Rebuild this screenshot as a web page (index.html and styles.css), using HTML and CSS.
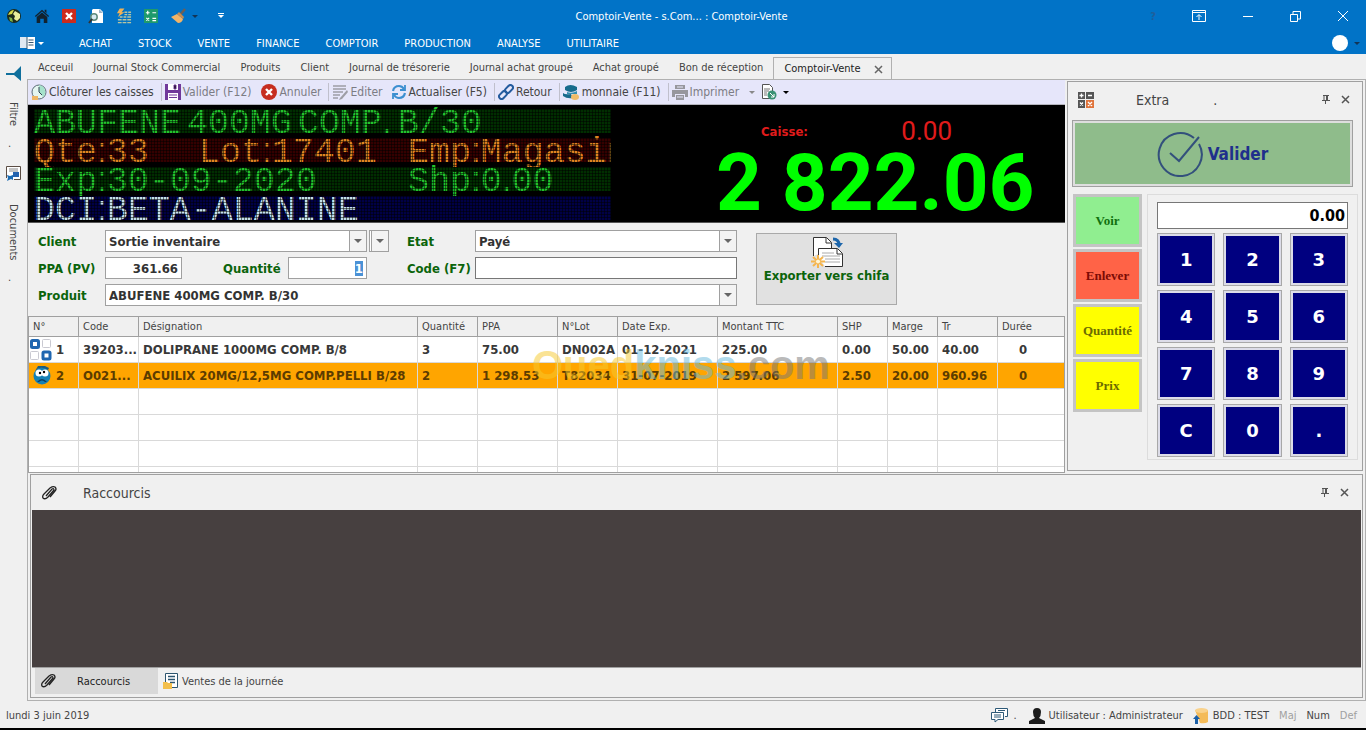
FILE: index.html
```html
<!DOCTYPE html>
<html lang="fr">
<head>
    <meta charset="UTF-8">
    <meta name="viewport" content="width=device-width, initial-scale=1.0">
    <title>Comptoir-Vente</title>
    <link rel="stylesheet" href="styles.css">
</head>
<body>
    <!-- Barre de titre et menu -->
    <header class="top">
        <div class="title-bar">
            <div class="quick">
                <button aria-label="Application"><svg width="16" height="16" viewBox="0 0 16 16"><circle cx="8" cy="8" r="7" fill="#1c2b1c"/><path d="M2 7q2-5 6-5l-2 4z" fill="#d8dc4a"/><path d="M9 3l5 3v4l-3 3-3-2 1-3-2-2z" fill="#e9ef9d"/><path d="M3 9l3 1 1 4-3-1z" fill="#7fb548"/></svg></button>
                <button aria-label="Accueil"><svg width="16" height="16" viewBox="0 0 18 16"><path d="M1 8L9 1l8 7-1 1-7-6-7 6z" fill="#12222e"/><path d="M3 9l6-5 6 5v7h-4v-5H7v5H3zM12 1h2v4l-2-2z" fill="#12222e"/></svg></button>
                <button aria-label="Fermer"><svg width="14" height="14" viewBox="0 0 14 14"><rect width="14" height="14" fill="#cc2b1d"/><path d="M4 4l6 6M10 4l-6 6" stroke="#fff" stroke-width="2.4"/></svg></button>
                <button aria-label="Aperçu"><svg width="16" height="16" viewBox="0 0 16 16"><path d="M5 1h7l3 3v11H4V2z" fill="#fff"/><path d="M11 1v4h4" fill="#9bb4c8"/><circle cx="6" cy="9" r="3.2" fill="#d7eaf2" stroke="#5d8a7b" stroke-width="1.5"/><path d="M4 11l-3 4" stroke="#333" stroke-width="2"/></svg></button>
                <button aria-label="Calcul rapide"><svg width="16" height="16" viewBox="0 0 17 16"><path d="M4 0h5L6 4h3L2 9l2-4H1z" fill="#f2b255"/><path d="M9 4h3M13 4h3M4 9h3M8 9h3M12 9h4M9 6.5h3M13 6.5h3M2 12h4M7 12h4M12 12h4M2 15h4M7 15h4M12 15h4" stroke="#b9c5a0" stroke-width="1.5"/></svg></button>
                <button aria-label="Calculatrice"><svg width="14" height="14" viewBox="0 0 15 15"><rect width="15" height="15" fill="#1f9a6b"/><path d="M2 4h4M4 2v4M9 4h4M2.500 9.500l3 3M5.500 9.500l-3 3M9 10h4M9 12.500h4" stroke="#fff" stroke-width="1.3"/></svg></button>
                <button aria-label="Nettoyer"><svg width="16" height="16" viewBox="0 0 16 16"><path d="M15 1l-5 6" stroke="#6a5f59" stroke-width="2.5"/><path d="M1 9l6-3 6 5q-1 4-5 4z" fill="#f2b467"/><path d="M7 6l2-2 5 5-1 2z" fill="#c98d52"/></svg></button>
                <span class="caret dark"></span>
                <span class="caret lined"></span>
            </div>
            <div class="title">Comptoir-Vente - s.Com... : Comptoir-Vente</div>
            <div class="window-buttons">
                <button class="help" aria-label="Aide">?</button>
                <button aria-label="Ruban"><svg width="14" height="12" viewBox="0 0 14 12" fill="none" stroke="#fff"><path d="M.5.5h13v11H.5zM.5 2.500h13M7 10V5M4.500 7L7 4.500 9.500 7"/></svg></button>
                <button aria-label="Réduire"><svg width="12" height="12" viewBox="0 0 12 12"><path d="M1 6.500h10" stroke="#fff"/></svg></button>
                <button aria-label="Restaurer"><svg width="11" height="11" viewBox="0 0 11 11" fill="none" stroke="#fff"><path d="M.5 3.500h7v7h-7zM3 3V.5h7.500V8H8"/></svg></button>
                <button aria-label="Quitter"><svg width="12" height="12" viewBox="0 0 12 12"><path d="M1 1l10 10M11 1L1 11" stroke="#fff"/></svg></button>
            </div>
        </div>
        <nav class="menu">
            <button class="book" aria-label="Fichier"><svg width="15" height="12" viewBox="0 0 15 12"><rect width="7" height="11" fill="#dfe9f2"/><rect x="7" width="8" height="12" fill="#fff"/><path d="M8.500 3h5M8.500 5.500h5M8.500 8h5M7 0v12" stroke="#36566f"/></svg><span class="caret"></span></button>
            <a href="#">ACHAT</a>
            <a href="#">STOCK</a>
            <a href="#">VENTE</a>
            <a href="#">FINANCE</a>
            <a href="#">COMPTOIR</a>
            <a href="#">PRODUCTION</a>
            <a href="#">ANALYSE</a>
            <a href="#">UTILITAIRE</a>
            <button class="user" aria-label="Compte"><span class="avatar"></span><span class="caret dark"></span></button>
        </nav>
    </header>

    <div class="workspace">
        <!-- Panneaux repliés à gauche -->
        <aside class="rail">
            <svg width="16" height="15" viewBox="0 0 16 15"><path d="M15 0v15L8 9H0V7h8z" fill="#0f6f9c"/></svg>
            <button class="rail-filter">Filtre</button>
            <span class="rail-dot">.</span>
            <svg class="rail-doc" width="15" height="15" viewBox="0 0 15 15"><path d="M.5 12V.5h14v13H8" fill="#fff" stroke="#5b4d44"/><path d="M3 3h9M3 5h9" stroke="#888"/><path d="M7 6h6v5H7z" fill="#2563ae"/><path d="M1 9l3 1 3-1v5l-2-1-4 2 1-3z" fill="#1a6ab2"/></svg>
            <button class="rail-documents">Documents</button>
            <span class="rail-dot">.</span>
        </aside>

        <div class="content">
            <nav class="tabs">
                <a href="#">Acceuil</a>
                <a href="#">Journal Stock Commercial</a>
                <a href="#">Produits</a>
                <a href="#">Client</a>
                <a href="#">Journal de trésorerie</a>
                <a href="#">Journal achat groupé</a>
                <a href="#">Achat groupé</a>
                <a href="#">Bon de réception</a>
                <a href="#" class="active">Comptoir-Vente <svg width="9" height="9" viewBox="0 0 9 9"><path d="M1 1l7 7M8 1L1 8" stroke="#666" stroke-width="1.500"/></svg></a>
            </nav>

            <main class="page">
                <div class="upper">
                    <section class="sale">
                        <div class="toolbar">
                            <button><svg width="16" height="16" viewBox="0 0 16 16"><circle cx="8" cy="8" r="7" fill="#e4f6f0" stroke="#5b6b77"/><path d="M8 1a7 7 0 0 1 4 12L8 8z" fill="#a5e2cb"/><path d="M8 3v5l3 3" fill="none" stroke="#345"/><path d="M1 12h6v4H1z" fill="#efb765"/></svg>Clôturer les caisses</button>
                            <button class="off sep valid"><svg width="16" height="16" viewBox="0 0 16 16"><path d="M0 0h16v16H0z" fill="#70389a"/><path d="M3 0h10v6H3zM3 9h10v7H3z" fill="#fff"/><path d="M9 1h2v4H9zM4 11h8M4 13.500h8" stroke="#70389a"/></svg>Valider (F12)</button>
                            <button class="off cancel"><svg width="16" height="16" viewBox="0 0 16 16"><circle cx="8" cy="8" r="8" fill="#c62d20"/><path d="M5 5l6 6M11 5l-6 6" stroke="#fff" stroke-width="2.400"/></svg>Annuler</button>
                            <button class="off sep edit"><svg width="16" height="16" viewBox="0 0 16 16"><path d="M1 2h13M1 5h13M1 8h10M1 11h7M1 14h5" stroke="#9d9da5" stroke-width="1.500"/><path d="M15 6l-7 8-1 2 3-1 6-7z" fill="#9d9da5"/></svg>Editer</button>
                            <button class="refresh"><svg width="14" height="16" viewBox="0 0 14 16" fill="none" stroke="#3c8fd0" stroke-width="2.200"><path d="M1 7q1-5 6-5 3 0 5 3M13 9q-1 5-6 5-3 0-5-3"/><path d="M13 1v5H8M1 15v-5h5" stroke-width="1.800"/></svg>Actualiser (F5)</button>
                            <button class="sep link"><svg width="16" height="16" viewBox="0 0 16 16" fill="none" stroke="#245b9e" stroke-width="2"><rect x="6.500" y="2.500" width="9" height="5" rx="2.500" transform="rotate(-45 11 5)"/><rect x=".5" y="8.500" width="9" height="5" rx="2.500" transform="rotate(-45 5 11)"/></svg>Retour</button>
                            <button class="sep money"><svg width="17" height="16" viewBox="0 0 17 16"><path d="M2 3q5-4 12 0v3q-6 4-12 0zM0 9q2 2 8 1l2 4q-6 1-10-2z" fill="#176b8c"/><path d="M4 8q5 2 10-1v3H4z" fill="#3390b0"/><ellipse cx="12" cy="13" rx="4" ry="3" fill="#f0bd69"/></svg>monnaie (F11)</button>
                            <button class="off sep print"><svg width="16" height="15" viewBox="0 0 16 15"><path d="M3 0h10v4H3zM0 5h16v7h-3V9H3v3H0zM4 10h8v5H4z" fill="#97979d"/><path d="M5 2h6M5 12h6" stroke="#e6e6fa"/></svg>Imprimer<span class="caret grey"></span></button>
                            <button class="export" aria-label="Exporter"><svg width="16" height="16" viewBox="0 0 16 16"><path d="M1.500.5h7l3 3v11h-10z" fill="#fff" stroke="#555"/><path d="M3 5h6M3 7h5M3 9h3M3 11h3" stroke="#777"/><circle cx="11" cy="11" r="4.500" fill="#3a9175"/><path d="M9 9l4 4v-3M13 13h-3" stroke="#fff" fill="none"/></svg><span class="caret black"></span></button>
                        </div>

                        <!-- Afficheur -->
                        <div class="display">
                            <div class="led">
                                <div class="led-row green"><span>ABUFENE</span><span>400MG</span><span>COMP<i>.</i></span><span>B/30</span></div>
                                <div class="led-row amber"><span class="c1">Qte<i>:</i>33</span><span class="c2">Lot<i>:</i>17401</span><span>Emp<i>:</i>Magasin</span></div>
                                <div class="led-row green"><span class="c12">Exp<i>:</i>30-09-2020</span><span>Shp<i>:</i>0<i>.</i>00</span></div>
                                <div class="led-row blue"><span>DCI<i>:</i>BETA-ALANINE</span></div>
                            </div>
                            <div class="amount">
                                <div class="caisse"><span>Caisse:</span><output>0.00</output></div>
                                <output class="total">2 822.06</output>
                            </div>
                        </div>

                        <form class="entry">
                            <div class="fields">
                                <div class="line">
                                    <label for="client">Client</label>
                                    <div class="combo w-client"><select id="client"><option>Sortie inventaire</option></select></div>
                                    <div class="combo w-mini"><select aria-label="Options client"><option></option></select></div>
                                    <label for="etat" class="mid">Etat</label>
                                    <div class="combo w-etat"><select id="etat"><option>Payé</option></select></div>
                                </div>
                                <div class="line">
                                    <label for="ppa">PPA (PV)</label>
                                    <input id="ppa" class="w-ppa" value="361.66">
                                    <label for="qte" class="qte">Quantité</label>
                                    <input id="qte" class="w-qte" value="1">
                                    <label for="code" class="mid code">Code (F7)</label>
                                    <input id="code" class="w-etat dark-border">
                                </div>
                                <div class="line">
                                    <label for="produit">Produit</label>
                                    <div class="combo grow"><select id="produit"><option>ABUFENE 400MG COMP. B/30</option></select></div>
                                </div>
                            </div>
                            <button type="button" class="chifa"><svg width="32" height="32" viewBox="0 0 32 32" fill="none"><path d="M2.500 20V1.500h13l5 5V12" fill="#fff" stroke="#333"/><path d="M15 2v5h5" stroke="#333"/><path d="M7.500 20v-7.500h19l5 5v13H14" fill="#fff" stroke="#333"/><path d="M26 13v5h5" stroke="#333"/><path d="M11 17h12M11 20h18M14 23h15M14 26h15" stroke="#aaa"/><path d="M22 3q6 0 6 6" stroke="#1d66ab" stroke-width="3"/><path d="M23 7h9l-4 5z" fill="#1d66ab"/><path d="M7 19v13M0 25.500h14M2 21l10 9M12 21L2 30" stroke="#f5b54d" stroke-width="2"/><circle cx="7" cy="25.500" r="2.500" fill="#fff4d5" stroke="#f5b54d"/></svg>Exporter vers chifa</button>
                        </form>

                        <div class="grid">
                            <table>
                                <colgroup><col class="w50"><col class="w60"><col><col class="w60"><col class="w80"><col class="w60"><col class="w100"><col class="w120"><col class="w50"><col class="w50"><col class="w60"><col class="w66"></colgroup>
                                <thead>
                                    <tr><th>N°</th><th>Code</th><th>Désignation</th><th>Quantité</th><th>PPA</th><th>N°Lot</th><th>Date Exp.</th><th>Montant TTC</th><th>SHP</th><th>Marge</th><th>Tr</th><th>Durée</th></tr>
                                </thead>
                                <tbody>
                                    <tr><td class="num"><svg width="22" height="22" viewBox="0 0 22 22" fill="#fff"><rect x="1.500" y="1.500" width="7" height="7" rx="1" stroke="#1f66b0" stroke-width="3"/><rect x="12.500" y=".5" width="8" height="8" rx="1" stroke="#c9c9d1"/><rect x=".5" y="12.500" width="8" height="8" rx="1" stroke="#c9c9d1"/><rect x="13" y="13" width="7" height="7" rx="1" stroke="#1f66b0" stroke-width="3"/></svg>1</td><td>39203...</td><td>DOLIPRANE 1000MG COMP. B/8</td><td>3</td><td>75.00</td><td>DN002A</td><td>01-12-2021</td><td>225.00</td><td>0.00</td><td>50.00</td><td>40.00</td><td class="center">0</td></tr>
                                    <tr class="selected"><td class="num"><svg width="22" height="22" viewBox="0 0 22 22"><circle cx="12" cy="11" r="8.500" fill="#1681b5"/><path d="M5 6q5-6 13-1l1-2-4-2-7 0z" fill="#1c5c80"/><circle cx="9" cy="8" r="3.500" fill="#fff"/><circle cx="15" cy="8" r="3.500" fill="#fff"/><circle cx="10" cy="8" r="1.200"/><circle cx="14" cy="7" r="1.200"/><path d="M7 17q5-6 10 0l-2 0q-3-3-6 0z" fill="#0d3f63"/></svg>2</td><td>O021...</td><td>ACUILIX 20MG/12,5MG COMP.PELLI B/28</td><td>2</td><td>1 298.53</td><td>T82034</td><td>31-07-2019</td><td>2 597.06</td><td>2.50</td><td>20.00</td><td>960.96</td><td class="center">0</td></tr>
                                    <tr><td></td><td></td><td></td><td></td><td></td><td></td><td></td><td></td><td></td><td></td><td></td><td></td></tr>
                                    <tr><td></td><td></td><td></td><td></td><td></td><td></td><td></td><td></td><td></td><td></td><td></td><td></td></tr>
                                    <tr><td></td><td></td><td></td><td></td><td></td><td></td><td></td><td></td><td></td><td></td><td></td><td></td></tr>
                                    <tr><td></td><td></td><td></td><td></td><td></td><td></td><td></td><td></td><td></td><td></td><td></td><td></td></tr>
                                </tbody>
                            </table>
                            <div class="watermark"><span class="wm-yellow">Oued</span><span class="wm-blue">kniss</span><span class="wm-grey">.com</span></div>
                        </div>
                    </section>

                    <!-- Panneau Extra -->
                    <aside class="extra panel">
                        <div class="panel-head">
                            <svg width="16" height="16" viewBox="0 0 16 16"><path d="M0 0h7v7H0zM8 0h8v7H8zM0 8h7v8H0z" fill="#555"/><path d="M8 8h8v8H8z" fill="#e0743c"/><path d="M1.500 3.500h4M3.500 1.500v4M10 3.500h4M2 10.500l3 3M5 10.500l-3 3M10 10l4 4M14 10l-4 4" stroke="#fff" stroke-width="1.300"/></svg>
                            <h2>Extra</h2><span class="head-dot">.</span>
                            <button class="pin" aria-label="Épingler"><svg width="8" height="9" viewBox="0 0 8 9"><path d="M1 .5h6M2 0v5M0 5.500h8M3.500 5v4" stroke="#555"/><path d="M4 0h2v5H4z" fill="#555"/></svg></button>
                            <button class="shut" aria-label="Fermer"><svg width="9" height="9" viewBox="0 0 9 9"><path d="M1 1l7 7M8 1L1 8" stroke="#555" stroke-width="1.500"/></svg></button>
                        </div>
                        <button class="validate"><svg width="46" height="46" viewBox="0 0 46 46" fill="none" stroke="#33507c" stroke-width="2"><path d="M37 7A21.500 21.500 0 1 0 42 13"/><path d="M13 22l9 8L42 6"/></svg>Valider</button>
                        <div class="pad-area">
                            <div class="actions">
                                <button class="see">Voir</button>
                                <button class="remove">Enlever</button>
                                <button class="yellow">Quantité</button>
                                <button class="yellow">Prix</button>
                            </div>
                            <div class="keypad">
                                <input class="pad-value" aria-label="Montant" value="0.00">
                                <button>1</button><button>2</button><button>3</button>
                                <button>4</button><button>5</button><button>6</button>
                                <button>7</button><button>8</button><button>9</button>
                                <button>C</button><button>0</button><button>.</button>
                            </div>
                        </div>
                    </aside>
                </div>

                <!-- Panneau Raccourcis -->
                <section class="shortcuts panel">
                    <div class="panel-head">
                        <svg width="16" height="14" viewBox="0 0 16 14" fill="none" stroke="#222" stroke-width="1.300"><path d="M5 10l6-7q2-1 2 1l-6 7q-3 3-5 1-1-2 1-4l6-6q3-2 5-1 2 2 0 4l-5 6"/></svg>
                        <h2>Raccourcis</h2>
                        <button class="pin" aria-label="Épingler"><svg width="8" height="9" viewBox="0 0 8 9"><path d="M1 .5h6M2 0v5M0 5.500h8M3.500 5v4" stroke="#555"/><path d="M4 0h2v5H4z" fill="#555"/></svg></button>
                        <button class="shut" aria-label="Fermer"><svg width="9" height="9" viewBox="0 0 9 9"><path d="M1 1l7 7M8 1L1 8" stroke="#555" stroke-width="1.500"/></svg></button>
                    </div>
                    <div class="dark-area"></div>
                    <div class="bottom-tabs">
                        <button class="current"><svg width="16" height="14" viewBox="0 0 16 14" fill="none" stroke="#222" stroke-width="1.300"><path d="M5 10l6-7q2-1 2 1l-6 7q-3 3-5 1-1-2 1-4l6-6q3-2 5-1 2 2 0 4l-5 6"/></svg>Raccourcis</button>
                        <button><svg width="15" height="16" viewBox="0 0 15 16"><path d="M2.500 10V.5h12v14H9" fill="#fff" stroke="#2d556f"/><path d="M5 3.500h7M5 6.500h7M7 9.500h5" stroke="#2d556f" stroke-width="1.500"/><path d="M0 9h4l1 1h4v6H0z" fill="#f3bf4d"/></svg>Ventes de la journée</button>
                    </div>
                </section>
            </main>
        </div>
    </div>

    <footer class="status">
        <span class="date">lundi 3 juin 2019</span>
        <svg width="17" height="15" viewBox="0 0 17 15" fill="#fff" stroke="#2e5a78"><path d="M4.500 4V.5h12v8H14"/><path d="M.5 4.500h12v7H7L4 14v-2.500H.5zM3 7h7M3 9h7M7 2.500h7"/></svg>
        <span class="s-dot">.</span>
        <svg width="16" height="16" viewBox="0 0 16 16"><path d="M4 4q0-4 4-4t4 4-2 6l6 3v3H0v-3l6-3Q4 8 4 4z" fill="#1c1c1c"/></svg>
        <span class="s-user">Utilisateur : Administrateur</span>
        <svg width="16" height="16" viewBox="0 0 16 16"><path d="M2 2h13v12q-3 2-8 1z" fill="#f4bb58"/><ellipse cx="8.500" cy="2.500" rx="6.500" ry="2.500" fill="#f9d28c"/><path d="M0 11l3.500-4L7 11H5v5H2v-5z" fill="#1b5fa6"/></svg>
        <span class="s-bdd">BDD : TEST</span>
        <span class="dim s-maj">Maj</span>
        <span class="s-num">Num</span>
        <span class="dim">Def</span>
    </footer>

    <script>
        // Sélectionne la quantité à l'ouverture
        var qte = document.getElementById("qte");
        qte.focus();
        qte.select();
    </script>
</body>
</html>
```
FILE: styles.css
```css
* {
    box-sizing: border-box;
}

body {
    margin: 0;
    min-height: 100vh;
    display: flex;
    flex-direction: column;
    background-color: #f0f0f0;
    border-bottom: 2px solid #000;
    font-family: "DejaVu Sans Condensed", "DejaVu Sans", sans-serif;
    font-size: 11px;
    color: #444;
}

button {
    border: 0;
    padding: 0;
    background: none;
    font: inherit;
    color: inherit;
    white-space: nowrap;
}

a {
    color: inherit;
    text-decoration: none;
    white-space: nowrap;
}

svg {
    display: block;
    flex: none;
}

.caret {
    width: 0;
    border: 3px solid transparent;
    border-top-color: #fff;
    border-bottom: 0;
}

.caret.dark {
    border-top-color: #123456;
}

.caret.grey {
    border-top-color: #888;
}

.caret.black {
    border-top-color: #000;
}

/* Barre de titre */
.top {
    background-color: #0173c7;
    color: #fff;
}

.title-bar {
    height: 32px;
    display: flex;
    align-items: center;
}

.quick {
    flex: 1;
    display: flex;
    align-items: center;
    gap: 12px;
    padding-left: 6px;
}

.quick .dark {
    margin-left: -6px;
}

.quick .lined {
    position: relative;
    margin-left: 8px;
}

.quick .lined::before {
    content: "";
    position: absolute;
    top: -5px;
    left: -3px;
    width: 6px;
    border-top: 1px solid #fff;
}

.title {
    padding-left: 8px;
}

.window-buttons {
    flex: 1;
    display: flex;
    align-items: center;
    justify-content: flex-end;
    gap: 36px;
    padding-right: 17px;
}

.help {
    color: #1f5f9b;
    font-weight: bold;
}

/* Menu */
.menu {
    height: 22px;
    display: flex;
    align-items: center;
    gap: 26px;
    padding-left: 20px;
}

.book,
.user {
    display: flex;
    align-items: center;
    gap: 3px;
}

.book {
    margin-right: 9px;
}

.user {
    margin-left: auto;
    gap: 6px;
    padding-right: 6px;
}

.avatar {
    width: 16px;
    height: 16px;
    border-radius: 50%;
    background-color: #fff;
}

/* Zone de travail */
.workspace {
    flex: 1;
    display: flex;
}

.rail {
    width: 27px;
    display: flex;
    flex-direction: column;
    align-items: center;
    padding-top: 12px;
}

.rail button {
    writing-mode: vertical-rl;
}

.rail-filter {
    margin-top: 18px;
    height: 30px;
}

.rail-dot {
    margin-top: 8px;
    margin-right: 8px;
}

.rail-doc {
    margin-top: 16px;
}

.rail-documents {
    margin-top: 20px;
    height: 62px;
}

.content {
    flex: 1;
    min-width: 0;
    display: flex;
    flex-direction: column;
}

.tabs {
    height: 25px;
    display: flex;
    align-items: flex-end;
    padding-left: 1px;
}

.tabs a {
    height: 22px;
    padding: 0 10px;
    line-height: 22px;
}

.tabs .active {
    height: 23px;
    display: flex;
    align-items: center;
    gap: 13px;
    padding: 0 8px 0 10px;
    margin-bottom: -1px;
    border: 1px solid #b0b0b0;
    border-bottom: 0;
    background-color: #f0f0f0;
    color: #222;
}

.page {
    flex: 1;
    display: flex;
    flex-direction: column;
    border: 1px solid #b0b0b0;
    padding-bottom: 2px;
}

.upper {
    display: flex;
    gap: 2px;
}

.sale {
    flex: 1;
    min-width: 0;
}

/* Barre d'outils */
.toolbar {
    height: 25px;
    display: flex;
    align-items: center;
    padding-left: 3px;
    background-color: #e6e6fa;
    border-bottom: 1px solid #b5b5bd;
    font-size: 12px;
}

.toolbar button {
    height: 18px;
    display: flex;
    align-items: center;
    gap: 2px;
}

.toolbar .off {
    color: #7c7c84;
}

.toolbar .sep {
    margin-left: 7px;
    padding-left: 3px;
    border-left: 1px solid #c0c0cc;
}

.cancel,
.refresh {
    margin-left: 10px;
}

.toolbar .grey {
    margin-left: 8px;
}

.export {
    margin-left: 6px;
}

.export .caret {
    margin-left: 4px;
}

/* Afficheur à LED */
.display {
    height: 118px;
    display: flex;
    background-color: #000;
    border-bottom: 1px solid #555;
}

.led {
    width: 583px;
    flex: none;
    padding: 4px 0 0 6px;
    display: flex;
    flex-direction: column;
    gap: 5px;
    overflow: hidden;
}

.led-row {
    position: relative;
    height: 24px;
    display: flex;
    align-items: baseline;
    gap: 6px;
    font-family: "Liberation Mono", monospace;
    font-size: 35px;
    line-height: 24px;
    white-space: nowrap;
}

.led-row span {
    flex: none;
}

.led-row i {
    font-family: "Liberation Sans", sans-serif;
    font-style: normal;
}

/* trame de points par-dessus le texte */
.led-row::after {
    content: "";
    position: absolute;
    inset: 0 0 -5px;
    background-image:
        repeating-linear-gradient(90deg, rgba(0, 0, 0, 0.5) 0 1px, transparent 1px 3px),
        repeating-linear-gradient(rgba(0, 0, 0, 0.5) 0 1px, transparent 1px 3px);
}

.led-row.green {
    background-color: #002e00;
    color: #22c32c;
}

.led-row.amber {
    background-color: #340000;
    color: #e08420;
}

.led-row.blue {
    background-color: #000046;
    color: #c5e0ea;
}

.c1 {
    width: 159px;
}

.c2 {
    width: 203px;
}

.c12 {
    width: 368px;
}

.amount {
    flex: 1;
    padding: 12px 0 0 105px;
    font-family: "Roboto", sans-serif;
}

.caisse {
    width: 236px;
    height: 28px;
    display: flex;
    align-items: center;
    justify-content: space-between;
    padding-left: 45px;
    color: #e01b1b;
    font-size: 26px;
}

.caisse span {
    font-family: "DejaVu Sans Condensed", sans-serif;
    font-size: 13px;
    font-weight: bold;
}

.total {
    display: block;
    height: 76px;
    line-height: 76px;
    font-size: 80px;
    font-weight: bold;
    color: #00ff00;
    white-space: nowrap;
}

/* Saisie */
.entry {
    display: flex;
    gap: 19px;
    padding: 7px 0 10px 10px;
    font-size: 13px;
    font-weight: bold;
}

.fields {
    width: 699px;
    display: flex;
    flex-direction: column;
    gap: 5px;
}

.line {
    display: flex;
    align-items: center;
}

.line label {
    width: 67px;
    flex: none;
    color: #0b640b;
    white-space: nowrap;
}

.line .mid {
    width: 68px;
    margin-left: 18px;
}

.line .code {
    margin-left: 40px;
}

.line .qte {
    width: 65px;
    margin-left: 41px;
}

.line input,
.combo {
    height: 22px;
    border: 1px solid #a0a0a0;
    background-color: #fff;
    font: inherit;
    color: #333;
}

.line input {
    border-radius: 0;
    padding: 0 3px;
    text-align: right;
    outline: 0;
}

.line input::selection {
    background-color: #4b92d6;
    color: #fff;
}

.line .dark-border {
    border-color: #777;
    text-align: left;
}

.combo {
    position: relative;
}

.combo select {
    width: 100%;
    height: 100%;
    appearance: none;
    border: 0;
    padding: 0 3px;
    background: none;
    font: inherit;
    color: inherit;
}

.combo::before {
    content: "";
    position: absolute;
    top: 0;
    right: 0;
    width: 16px;
    height: 100%;
    background-color: #f3f3f3;
    border-left: 1px solid #a0a0a0;
}

.combo::after {
    content: "";
    position: absolute;
    top: 8px;
    right: 4px;
    border: 4px solid transparent;
    border-top-color: #666;
    border-bottom: 0;
}

.w-client {
    width: 262px;
}

.w-mini {
    width: 20px;
    margin-left: 2px;
}

.w-etat {
    width: 262px;
}

.w-ppa {
    width: 77px;
}

.w-qte {
    width: 79px;
}

.grow {
    flex: 1;
}

.chifa {
    width: 141px;
    height: 72px;
    margin-top: 3px;
    display: flex;
    flex-direction: column;
    align-items: center;
    padding-top: 2px;
    border: 1px solid #a9a9a9;
    background-color: #e1e1e1;
    color: #0b640b;
}

/* Lignes de vente */
.grid {
    position: relative;
    height: 157px;
    overflow: hidden;
    border: 1px solid #a0a0a0;
    background-color: #fff;
}

.grid table {
    width: 100%;
    table-layout: fixed;
    border-collapse: separate;
    border-spacing: 0;
}

.w50 {
    width: 50px;
}

.w60 {
    width: 60px;
}

.w66 {
    width: 66px;
}

.w80 {
    width: 80px;
}

.w100 {
    width: 100px;
}

.w120 {
    width: 120px;
}

.grid th {
    height: 20px;
    padding: 0 4px;
    border-right: 1px solid #a0a0a0;
    border-bottom: 1px solid #a0a0a0;
    background-color: #f0f0f0;
    font-weight: normal;
    text-align: left;
}

.grid td {
    height: 26px;
    padding: 0 0 0 4px;
    border-right: 1px solid #d9d9d9;
    border-bottom: 1px solid #d9d9d9;
    font-size: 13px;
    font-weight: bold;
    color: #383838;
    white-space: nowrap;
}

.grid th:last-child,
.grid td:last-child {
    border-right: 0;
}

.grid .num {
    padding-left: 1px;
}

.num svg {
    display: inline-block;
    vertical-align: middle;
    margin-right: 4px;
}

.grid .center {
    padding-right: 20px;
    text-align: center;
}

.grid .selected td {
    background-color: #ffa500;
    color: #5c3c00;
}

.watermark {
    position: absolute;
    top: 24px;
    left: 503px;
    font-family: "Liberation Sans", sans-serif;
    font-size: 40px;
    font-weight: bold;
    line-height: 48px;
    opacity: 0.5;
    pointer-events: none;
}

.wm-yellow {
    color: #f7c92e;
}

.wm-blue {
    color: #67b8dd;
}

.wm-grey {
    color: #777;
}

/* Panneaux */
.panel {
    border: 1px solid #a0a0a0;
    background-color: #f0f0f0;
}

.panel-head {
    height: 35px;
    display: flex;
    align-items: center;
    padding: 0 12px 0 9px;
}

.panel-head h2 {
    margin: 0 0 0 26px;
    font-size: 14px;
    font-weight: normal;
}

.pin {
    margin-left: auto;
}

.shut {
    margin-left: 11px;
}

.extra {
    width: 296px;
    margin: 1px 2px 2px 0;
    padding: 0 4px;
}

.extra .panel-head {
    padding: 0 8px 0 6px;
}

.extra .panel-head h2 {
    margin-left: 42px;
}

.head-dot {
    margin-left: 44px;
    font-size: 14px;
}

.validate {
    width: 281px;
    height: 67px;
    margin-top: 3px;
    display: flex;
    align-items: center;
    justify-content: center;
    gap: 5px;
    border: 1px solid #a0a0a0;
    outline: 2px solid #dedede;
    outline-offset: -3px;
    background-color: #8fbc8b;
    font-size: 17px;
    font-weight: bold;
    color: #1f2f8c;
}

.pad-area {
    display: flex;
    gap: 5px;
    margin-top: 7px;
}

.actions {
    width: 70px;
    display: flex;
    flex-direction: column;
    gap: 2px;
    padding-left: 1px;
}

.actions button {
    height: 53px;
    border: 3px solid #c4c4c4;
    font-family: "Liberation Serif", serif;
    font-size: 13px;
    font-weight: bold;
}

.see {
    background-color: #90ee90;
    color: #11700f;
}

.remove {
    background-color: #ff6347;
    color: #7c0b05;
}

.yellow {
    background-color: #ffff00;
    color: #6b6b00;
}

.keypad {
    flex: 1;
    display: grid;
    grid-template-columns: 1fr 1fr 1fr;
    gap: 4px 8px;
    padding: 7px 9px 2px;
    border: 1px solid #dcdcdc;
}

.pad-value {
    grid-column: 1 / 4;
    width: 100%;
    height: 27px;
    padding: 0 2px;
    border: 1px solid #777;
    background-color: #fff;
    text-align: right;
    font-family: "DejaVu Sans Condensed", sans-serif;
    font-size: 16px;
    font-weight: bold;
    color: #000;
}

.keypad button {
    height: 53px;
    border: 1px solid #a8a8a8;
    outline: 2px solid #dcdce8;
    outline-offset: -3px;
    background-color: #000080;
    font-family: "DejaVu Sans", sans-serif;
    font-size: 18px;
    font-weight: bold;
    color: #fff;
}

.shortcuts {
    flex: 1;
    display: flex;
    flex-direction: column;
    margin: 1px 2px 0;
    padding: 0 1px;
}

.dark-area {
    flex: 1;
    min-height: 60px;
    background-color: #474040;
}

.bottom-tabs {
    height: 30px;
    display: flex;
    align-items: flex-start;
    padding-left: 3px;
    border-top: 1px solid #a0a0a0;
}

.bottom-tabs button {
    height: 26px;
    display: flex;
    align-items: center;
    gap: 4px;
    padding: 0 5px;
}

.bottom-tabs .current {
    width: 123px;
    gap: 21px;
    background-color: #d9d9d9;
    color: #222;
}

/* Barre d'état */
.status {
    height: 27px;
    display: flex;
    align-items: center;
    padding: 2px 9px 0 6px;
    white-space: nowrap;
}

.date {
    margin-right: auto;
}

.s-dot {
    margin: 0 12px 0 5px;
}

.s-user {
    margin: 0 10px 0 4px;
}

.s-bdd {
    margin: 0 10px 0 4px;
}

.s-maj,
.s-num {
    margin-right: 10px;
}

.dim {
    color: #a0a0a0;
}
```
